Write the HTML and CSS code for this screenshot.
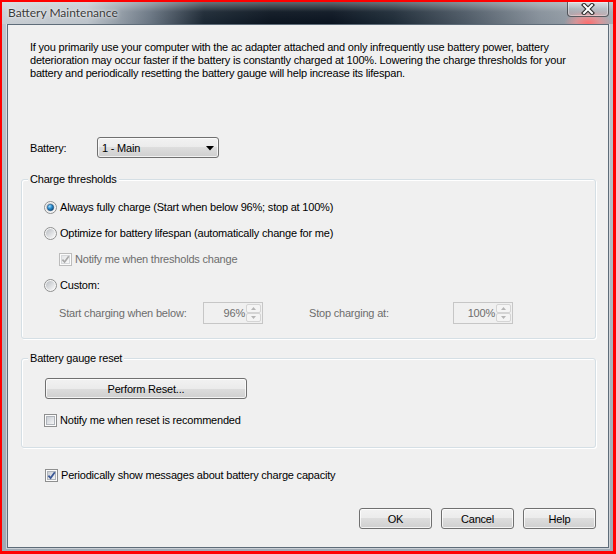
FILE: index.html
```html
<!DOCTYPE html>
<html>
<head>
<meta charset="utf-8">
<title>Battery Maintenance</title>
<link rel="stylesheet" href="styles.css">
</head>
<body>
<svg class="svg-defs" width="0" height="0" aria-hidden="true">
  <defs>
    <linearGradient id="radioFill" x1="0" y1="0" x2="1" y2="1">
      <stop offset="0" stop-color="#b9bdc2"/>
      <stop offset="1" stop-color="#fbfbfb"/>
    </linearGradient>
    <radialGradient id="radioDot" cx="0.35" cy="0.3" r="0.8">
      <stop offset="0" stop-color="#a8e0ff"/>
      <stop offset="0.45" stop-color="#2c90d2"/>
      <stop offset="1" stop-color="#0d3e69"/>
    </radialGradient>
    <linearGradient id="boxFill" x1="0" y1="0" x2="1" y2="1">
      <stop offset="0" stop-color="#c6cbd2"/>
      <stop offset="1" stop-color="#f8f8f8"/>
    </linearGradient>
    <linearGradient id="boxFillDis" x1="0" y1="0" x2="1" y2="1">
      <stop offset="0" stop-color="#e2e4e6"/>
      <stop offset="1" stop-color="#fafafa"/>
    </linearGradient>
  </defs>
</svg>

<div class="window">
  <div class="titlebar">
    <span class="title">Battery Maintenance</span>
    <div class="close">
      <svg width="16" height="12" viewBox="0 0 16 12">
        <path d="M4 2 L12 10 M12 2 L4 10" stroke="#2a2a2a" stroke-width="4.2" stroke-linecap="square" fill="none"/>
        <path d="M4 2 L12 10 M12 2 L4 10" stroke="#ffffff" stroke-width="2" stroke-linecap="square" fill="none"/>
      </svg>
    </div>
  </div>

  <div class="client">
    <p class="intro">If you primarily use your computer with the ac adapter attached and only infrequently use battery power, battery<br>deterioration may occur faster if the battery is constantly charged at 100%. Lowering the charge thresholds for your<br>battery and periodically resetting the battery gauge will help increase its lifespan.</p>

    <div class="battery-row">
      <span class="battery-label">Battery:</span>
      <div class="combo">
        <span>1 - Main</span>
        <svg class="combo-arrow" width="8" height="5" viewBox="0 0 8 5"><path d="M0 0 H8 L4 4.5 Z" fill="#000"/></svg>
      </div>
    </div>

    <fieldset class="group thresholds">
      <legend>Charge thresholds</legend>
      <div class="opt">
        <svg class="radio" viewBox="0 0 13 13"><circle cx="6.5" cy="6.5" r="6" fill="#f6f6f6" stroke="#8e8f8f"/><circle cx="6.5" cy="6.5" r="4.5" fill="url(#radioFill)"/><circle cx="6.5" cy="6.5" r="3.2" fill="url(#radioDot)" stroke="#1d4f7c" stroke-width="0.6"/></svg>
        <span>Always fully charge (Start when below 96%; stop at 100%)</span>
      </div>
      <div class="opt">
        <svg class="radio" viewBox="0 0 13 13"><circle cx="6.5" cy="6.5" r="6" fill="#f6f6f6" stroke="#8e8f8f"/><circle cx="6.5" cy="6.5" r="4.5" fill="url(#radioFill)"/></svg>
        <span>Optimize for battery lifespan (automatically change for me)</span>
      </div>
      <div class="opt sub disabled">
        <svg class="check" viewBox="0 0 13 13"><rect x="0.5" y="0.5" width="12" height="12" fill="#fbfbfb" stroke="#bcbcbc"/><rect x="2.5" y="2.5" width="8" height="8" fill="url(#boxFillDis)" stroke="#d6d8da"/><path d="M3.4 6.6 L5.6 9 L9.8 3.3" fill="none" stroke="#a8a8a8" stroke-width="1.7"/></svg>
        <span>Notify me when thresholds change</span>
      </div>
      <div class="opt">
        <svg class="radio" viewBox="0 0 13 13"><circle cx="6.5" cy="6.5" r="6" fill="#f6f6f6" stroke="#8e8f8f"/><circle cx="6.5" cy="6.5" r="4.5" fill="url(#radioFill)"/></svg>
        <span>Custom:</span>
      </div>
      <div class="spin-row disabled">
        <span class="spin-label">Start charging when below:</span>
        <div class="spin">
          <span class="spin-val">96%</span>
          <div class="spin-btns">
            <span class="spin-btn"><svg width="5" height="3" viewBox="0 0 5 3"><path d="M0 3 L2.5 0 L5 3 Z" fill="#b5b5b5"/></svg></span>
            <span class="spin-btn"><svg width="5" height="3" viewBox="0 0 5 3"><path d="M0 0 L2.5 3 L5 0 Z" fill="#b5b5b5"/></svg></span>
          </div>
        </div>
        <span class="spin-label second">Stop charging at:</span>
        <div class="spin">
          <span class="spin-val">100%</span>
          <div class="spin-btns">
            <span class="spin-btn"><svg width="5" height="3" viewBox="0 0 5 3"><path d="M0 3 L2.5 0 L5 3 Z" fill="#b5b5b5"/></svg></span>
            <span class="spin-btn"><svg width="5" height="3" viewBox="0 0 5 3"><path d="M0 0 L2.5 3 L5 0 Z" fill="#b5b5b5"/></svg></span>
          </div>
        </div>
      </div>
    </fieldset>

    <fieldset class="group gauge">
      <legend>Battery gauge reset</legend>
      <button class="btn reset-btn">Perform Reset...</button>
      <div class="opt reset-opt">
        <svg class="check" viewBox="0 0 13 13"><rect x="0.5" y="0.5" width="12" height="12" fill="#fbfbfb" stroke="#8e8f8f"/><rect x="2.5" y="2.5" width="8" height="8" fill="url(#boxFill)" stroke="#b0b5bb"/></svg>
        <span>Notify me when reset is recommended</span>
      </div>
    </fieldset>

    <div class="opt periodic">
      <svg class="check" viewBox="0 0 13 13"><rect x="0.5" y="0.5" width="12" height="12" fill="#fbfbfb" stroke="#8e8f8f"/><rect x="2.5" y="2.5" width="8" height="8" fill="url(#boxFill)" stroke="#b0b5bb"/><path d="M3.4 6.6 L5.6 9 L9.8 3.3" fill="none" stroke="#3b5896" stroke-width="1.8"/></svg>
      <span>Periodically show messages about battery charge capacity</span>
    </div>

    <div class="actions">
      <button class="btn action">OK</button>
      <button class="btn action">Cancel</button>
      <button class="btn action">Help</button>
    </div>
  </div>
</div>
</body>
</html>
```

FILE: styles.css
```css
* { box-sizing: border-box; }

html, body {
  margin: 0;
  padding: 0;
}

body {
  width: 616px;
  height: 554px;
  overflow: hidden;
  background: #ffffff;
  font-family: "Liberation Sans", Arial, sans-serif;
  font-size: 11px;
  letter-spacing: -0.2px;
  color: #000;
}

.svg-defs {
  display: block;
  width: 0;
  height: 0;
  overflow: hidden;
}

.window {
  width: 616px;
  height: 554px;
  border-style: solid;
  border-color: #ff0000;
  border-width: 2px 3px 3px 2px;
  display: flex;
  flex-direction: column;
  background: linear-gradient(180deg, #c0c7ce 0%, #aab3bc 60%, #a0aab4 100%);
}

.titlebar {
  position: relative;
  flex: none;
  height: 22px;
  display: flex;
  align-items: center;
  padding-left: 6px;
  background:
    radial-gradient(ellipse 24px 12px at 586px 21px, rgba(255, 110, 110, 1) 0%, rgba(255, 140, 140, 0.6) 50%, rgba(255, 140, 140, 0) 100%),
    linear-gradient(180deg, rgba(255, 255, 255, 0.35) 0%, rgba(255, 255, 255, 0.05) 45%, rgba(255, 255, 255, 0) 100%),
    linear-gradient(90deg, #c9ced3 0%, #bcc3ca 14%, #6b7784 24%, #1b2733 33%, #0b1520 44%, #0a1420 54%, #1d2a36 64%, #4d5965 76%, #858f99 88%, #a4acb4 100%);
}

.title {
  font-family: Lato, "Liberation Sans", sans-serif;
  font-size: 12px;
  letter-spacing: 0;
  color: #3a3a3a;
  text-shadow: 0 0 5px rgba(255, 255, 255, 0.9), 0 0 2px rgba(255, 255, 255, 0.8);
  margin-top: -1px;
}

.close {
  position: absolute;
  top: 0;
  right: 4px;
  width: 42px;
  height: 15px;
  border: 1px solid rgba(50, 55, 60, 0.75);
  border-top: none;
  border-radius: 0 0 4px 4px;
  background: linear-gradient(180deg, rgba(255, 255, 255, 0.45) 0%, rgba(255, 255, 255, 0.15) 50%, rgba(255, 180, 180, 0.3) 100%);
  box-shadow: inset 0 0 0 1px rgba(255, 255, 255, 0.35);
  display: flex;
  align-items: center;
  justify-content: center;
}

.close svg { margin-top: -1px; }

.client {
  flex: none;
  height: 524px;
  margin: 0 4px 3px 5px;
  border: 1px solid #5e6c79;
  box-shadow: 0 0 0 1px rgba(255, 255, 255, 0.45);
  background: #f0f0f0;
  padding: 0 12px 0 13px;
  display: flex;
  flex-direction: column;
}

.intro {
  margin: 16px 0 0 9px;
  line-height: 13px;
  white-space: nowrap;
}

.battery-row {
  display: flex;
  align-items: center;
  margin: 57px 0 0 9px;
  height: 21px;
}

.battery-label {
  width: 67px;
}

.combo {
  width: 122px;
  height: 21px;
  border: 1px solid #707070;
  border-radius: 3px;
  background: linear-gradient(180deg, #f2f2f2 0%, #ebebeb 50%, #dddddd 50%, #cfcfcf 100%);
  box-shadow: inset 0 0 0 1px rgba(255, 255, 255, 0.7);
  display: flex;
  align-items: center;
  justify-content: space-between;
  padding: 0 4px 0 4px;
}

.combo-arrow { margin-top: 1px; }

.group {
  margin: 0;
  border: 1px solid #d5dfe5;
  border-radius: 3px;
  box-shadow: inset 1px 1px 0 #ffffff, 1px 1px 0 #ffffff;
  min-width: 0;
}

.group legend {
  padding: 0 2px;
  line-height: 14px;
  background: #f0f0f0;
}

.thresholds {
  margin-top: 14px;
  padding: 8px 0 14px 6px;
}

.gauge {
  margin-top: 12px;
  padding: 13px 0 16px 6px;
}

.opt {
  display: flex;
  align-items: center;
  height: 26px;
  margin-left: 16px;
}

.opt svg {
  flex: none;
  width: 13px;
  height: 13px;
  margin-right: 3px;
}

.opt.sub { margin-left: 31px; }

.disabled { color: #6d6d6d; }

.spin-row {
  display: flex;
  align-items: center;
  height: 22px;
  margin: 4px 0 0 31px;
}

.spin-label { width: 144px; }

.spin-label.second { margin-left: 46px; }

.spin {
  width: 60px;
  height: 22px;
  border: 1px solid #c6c6c6;
  background: #f0f0f0;
  display: flex;
  align-items: stretch;
  padding: 1px;
}

.spin-val {
  flex: 1;
  text-align: right;
  line-height: 18px;
  padding-right: 1px;
}

.spin-btns {
  width: 15px;
  display: flex;
  flex-direction: column;
}

.spin-btn {
  flex: 1;
  border: 1px solid #d4d4d4;
  border-radius: 2px;
  background: #f4f4f4;
  display: flex;
  align-items: center;
  justify-content: center;
}

.btn {
  height: 21px;
  padding: 0;
  border: 1px solid #707070;
  border-radius: 3px;
  background: linear-gradient(180deg, #f2f2f2 0%, #ebebeb 50%, #dddddd 50%, #cfcfcf 100%);
  box-shadow: inset 0 0 0 1px rgba(255, 255, 255, 0.75);
  font-family: "Liberation Sans", Arial, sans-serif;
  font-size: 11px;
  letter-spacing: -0.2px;
  color: #000;
}

.reset-btn {
  display: block;
  width: 202px;
  margin-left: 17px;
}

.reset-opt {
  height: 22px;
  margin-top: 10px;
  margin-left: 16px;
}

.periodic {
  height: 22px;
  margin-top: 16px;
  margin-left: 24px;
}

.actions {
  display: flex;
  justify-content: flex-end;
  gap: 9px;
  margin-top: 22px;
}

.action { width: 73px; }
```
